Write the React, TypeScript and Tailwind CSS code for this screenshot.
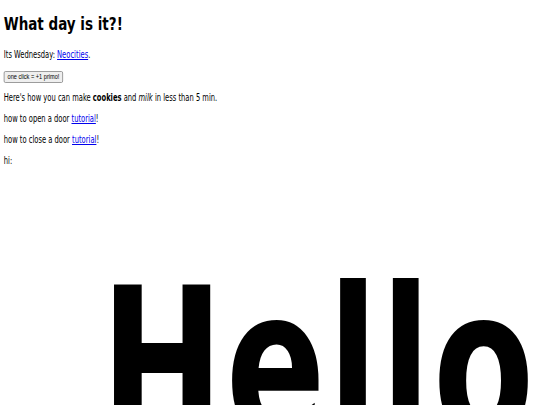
import React from "react";

export default function App() {
  return (
    <div className="w-[540px] h-[405px] overflow-hidden bg-white">
      <div className="w-[720px] h-[405px] origin-top-left scale-x-[0.75] pl-[5px] pt-[14px] text-black font-['DejaVu_Sans',sans-serif]">
        <h1 className="text-[18px] leading-[20px] font-bold m-0">What day is it?!</h1>
        <p className="text-[10px] leading-[12px] mt-[15px] origin-left scale-x-[0.9] whitespace-nowrap">
          Its Wednesday: <a href="#" className="text-[#0000ee] underline">Neocities</a>.
        </p>
        <div className="mt-[10px] h-[12px] flex">
          <button className="h-[12px] px-[4px] border border-[#8f8f8f] bg-[#efefef] rounded-[2px] text-[7.5px] leading-[10px] text-black font-['Liberation_Sans',sans-serif]">
            one click = +1 primo!
          </button>
        </div>
        <p className="text-[10px] leading-[12px] mt-[9px] origin-left scale-x-[0.9] whitespace-nowrap">
          Here's how you can make <b>cookies</b> and <i>milk</i> in less than 5 min.
        </p>
        <p className="text-[10px] leading-[12px] mt-[9px] origin-left scale-x-[0.9] whitespace-nowrap">
          how to open a door <a href="#" className="text-[#0000ee] underline">tutorial</a>!
        </p>
        <p className="text-[10px] leading-[12px] mt-[9px] origin-left scale-x-[0.9] whitespace-nowrap">
          how to close a door <a href="#" className="text-[#0000ee] underline">tutorial</a>!
        </p>
        <p className="text-[10px] leading-[12px] mt-[9px] origin-left scale-x-[0.9]">hi:</p>
        <div className="mt-[94px] ml-[129px] whitespace-nowrap text-[210px] leading-[210px] font-bold tracking-[3px] origin-left scale-x-[0.935]">Hello</div>
      </div>
    </div>
  );
}
